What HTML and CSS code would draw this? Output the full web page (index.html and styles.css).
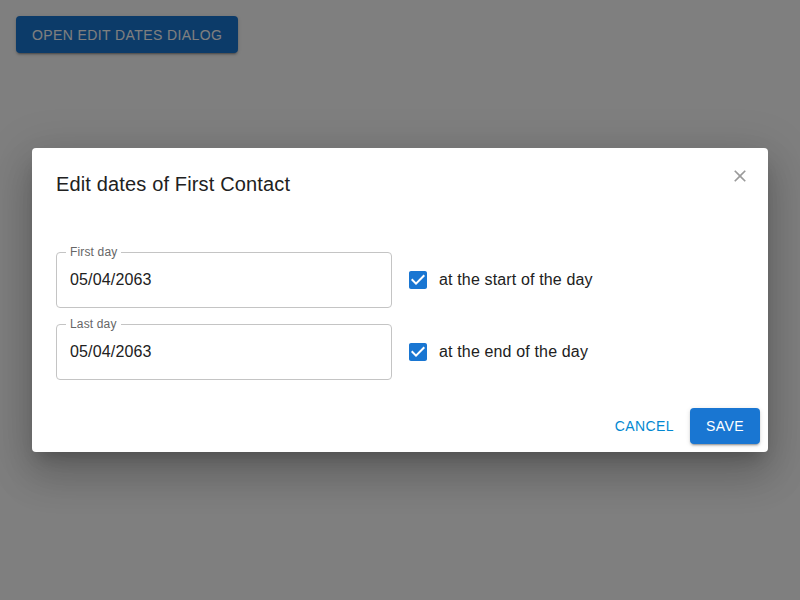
FILE: index.html
```html
<!DOCTYPE html>
<html>
<head>
<meta charset="utf-8">
<link rel="stylesheet" href="styles.css">
</head>
<body>
<div class="page">
  <button class="open-btn">OPEN EDIT DATES DIALOG</button>
</div>
<div class="backdrop">
  <div class="dialog">
    <div class="dialog-title">
      <h2>Edit dates of First Contact</h2>
      <button class="close" aria-label="close">
        <svg viewBox="0 0 24 24" width="20" height="20"><path fill="currentColor" d="M19 6.41 17.59 5 12 10.59 6.41 5 5 6.41 10.59 12 5 17.59 6.41 19 12 13.41 17.59 19 19 17.59 13.41 12z"/></svg>
      </button>
    </div>
    <div class="dialog-content">
      <div class="row">
        <fieldset class="field">
          <legend>First day</legend>
          <span class="value">05/04/2063</span>
        </fieldset>
        <label class="check">
          <span class="box"><svg viewBox="0 0 24 24" width="24" height="24"><path fill="#1976d2" d="M19 3H5c-1.11 0-2 .9-2 2v14c0 1.1.89 2 2 2h14c1.11 0 2-.9 2-2V5c0-1.1-.89-2-2-2zm-9 14-5-5 1.41-1.41L10 14.17l7.59-7.59L19 8l-9 9z"/></svg></span>
          <span class="check-label">at the start of the day</span>
        </label>
      </div>
      <div class="row">
        <fieldset class="field">
          <legend>Last day</legend>
          <span class="value">05/04/2063</span>
        </fieldset>
        <label class="check">
          <span class="box"><svg viewBox="0 0 24 24" width="24" height="24"><path fill="#1976d2" d="M19 3H5c-1.11 0-2 .9-2 2v14c0 1.1.89 2 2 2h14c1.11 0 2-.9 2-2V5c0-1.1-.89-2-2-2zm-9 14-5-5 1.41-1.41L10 14.17l7.59-7.59L19 8l-9 9z"/></svg></span>
          <span class="check-label">at the end of the day</span>
        </label>
      </div>
    </div>
    <div class="dialog-actions">
      <button class="text-btn">CANCEL</button>
      <button class="save-btn">SAVE</button>
    </div>
  </div>
</div>
</body>
</html>
```

FILE: styles.css
```css
* { box-sizing: border-box; }
html, body { margin: 0; padding: 0; }
body {
  width: 800px;
  height: 600px;
  background: #fff;
  font-family: "Liberation Sans", Arial, sans-serif;
  position: relative;
  overflow: hidden;
}
.page { padding: 16px; }
.open-btn {
  height: 37px;
  padding: 0 16px;
  border: none;
  border-radius: 4px;
  background: #1976d2;
  color: #fff;
  font-family: inherit;
  font-size: 14px;
  letter-spacing: 0.4px;
  white-space: nowrap;
  box-shadow: 0 3px 1px -2px rgba(0,0,0,.2), 0 2px 2px 0 rgba(0,0,0,.14), 0 1px 5px 0 rgba(0,0,0,.12);
}
.backdrop {
  position: absolute;
  inset: 0;
  background: rgba(0,0,0,0.5);
  display: flex;
  align-items: flex-start;
  justify-content: center;
  padding-top: 148px;
}
.dialog {
  width: 736px;
  background: #fff;
  border-radius: 4px;
  box-shadow: 0 11px 15px -7px rgba(0,0,0,.2), 0 24px 38px 3px rgba(0,0,0,.14), 0 9px 46px 8px rgba(0,0,0,.12);
  display: flex;
  flex-direction: column;
}
.dialog-title {
  position: relative;
  padding: 20px 24px 12px;
}
.dialog-title h2 {
  margin: 0;
  font-size: 20px;
  font-weight: 400;
  line-height: 32px;
  letter-spacing: 0.15px;
  color: #212121;
}
.close {
  position: absolute;
  top: 18px;
  right: 18px;
  width: 20px;
  height: 20px;
  padding: 0;
  border: none;
  background: none;
  color: #9a9a9a;
}
.close svg { display: block; }
.dialog-content {
  padding: 40px 24px 20px;
  display: flex;
  flex-direction: column;
  gap: 16px;
}
.row {
  display: flex;
  align-items: center;
}
.field {
  margin: 0;
  width: 336px;
  height: 56px;
  border: 1px solid #c4c4c4;
  border-radius: 4px;
  padding: 0 13px;
  position: relative;
  display: flex;
  align-items: center;
}
.field legend {
  font-size: 12px;
  color: #666;
  padding: 0 4px;
  line-height: 12px;
  letter-spacing: 0.15px;
  position: absolute;
  top: -7px;
  left: 9px;
  background: #fff;
}
.value {
  font-size: 16px;
  color: #212121;
  letter-spacing: 0.15px;
}
.check {
  display: flex;
  align-items: center;
  margin-left: 14px;
}
.box { width: 24px; height: 24px; display: block; }
.box svg { display: block; }
.check-label {
  margin-left: 9px;
  font-size: 16px;
  color: #212121;
  letter-spacing: 0.15px;
}
.dialog-actions {
  display: flex;
  justify-content: flex-end;
  align-items: center;
  gap: 8px;
  padding: 8px;
}
.text-btn {
  height: 36px;
  padding: 0 8px;
  border: none;
  background: none;
  color: #0288d1;
  font-family: inherit;
  font-size: 14px;
  letter-spacing: 0.4px;
}
.save-btn {
  height: 36px;
  width: 70px;
  border: none;
  border-radius: 4px;
  background: #1976d2;
  color: #fff;
  font-family: inherit;
  font-size: 14px;
  letter-spacing: 0.4px;
  box-shadow: 0 3px 1px -2px rgba(0,0,0,.2), 0 2px 2px 0 rgba(0,0,0,.14), 0 1px 5px 0 rgba(0,0,0,.12);
}
```
